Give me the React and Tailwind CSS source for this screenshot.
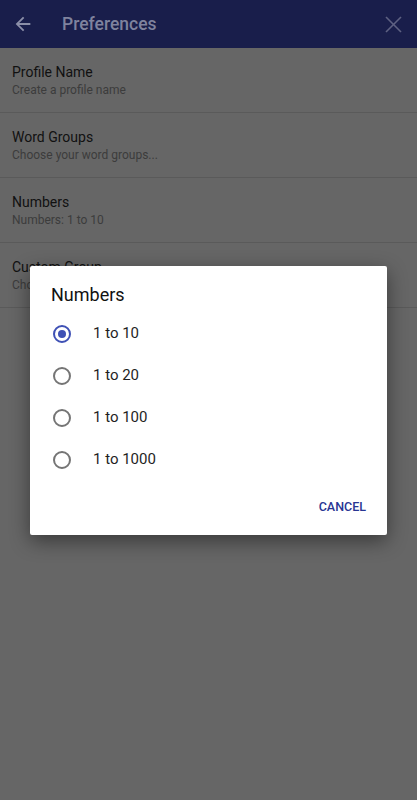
import React, { useState } from 'react';

const items = [
  { title: 'Profile Name', sub: 'Create a profile name' },
  { title: 'Word Groups', sub: 'Choose your word groups...' },
  { title: 'Numbers', sub: 'Numbers: 1 to 10' },
  { title: 'Custom Group', sub: 'Choose a custom group' },
];

const options = ['1 to 10', '1 to 20', '1 to 100', '1 to 1000'];

const App = () => {
  const [selected, setSelected] = useState(0);

  return (
    <div className="relative h-[800px] w-full overflow-hidden bg-[#666666] font-['Roboto',sans-serif]">
      {/* Toolbar (dimmed by the dialog scrim) */}
      <div className="flex h-12 items-center bg-[#191e4b]">
        <svg className="ml-[12px] h-[22px] w-[22px]" viewBox="0 0 24 24" fill="#8b8fa8">
          <path d="M20 11H7.83l5.59-5.59L12 4l-8 8 8 8 1.41-1.41L7.83 13H20v-2z" />
        </svg>
        <span className="ml-[28px] text-[17.5px] font-medium text-[#7f839e]">Preferences</span>
        <svg className="ml-auto mr-[15px] h-[17px] w-[17px]" viewBox="0 0 17 17" stroke="#5e6182" strokeWidth="1.6">
          <line x1="1" y1="1" x2="16" y2="16" />
          <line x1="16" y1="1" x2="1" y2="16" />
        </svg>
      </div>

      {/* Preference list */}
      <div className="flex flex-col">
        {items.map((item) => (
          <div key={item.title} className="border-b border-[#5a5a5a] px-3 pt-[14px] pb-[14px]">
            <div className="text-[14px] leading-[20px] text-[#111111]">{item.title}</div>
            <div className="text-[12px] leading-[16px] text-[#3c3c3c]">{item.sub}</div>
          </div>
        ))}
      </div>

      {/* Dialog */}
      <div className="absolute inset-0 flex items-center justify-center">
        <div className="w-[357px] rounded-[2px] bg-white shadow-[0_6px_20px_rgba(0,0,0,0.45)]">
          <div className="px-[21px] pt-[19px] text-[18px] leading-[20px] text-[#111111]">Numbers</div>
          <div className="mt-[8px] flex flex-col">
            {options.map((opt, i) => (
              <button
                key={opt}
                onClick={() => setSelected(i)}
                className="flex h-[42px] items-center pl-[23px] text-left"
              >
                <span
                  className={
                    'flex h-[18px] w-[18px] items-center justify-center rounded-full border-2 ' +
                    (selected === i ? 'border-[#3f51b5]' : 'border-[#757575]')
                  }
                >
                  {selected === i && <span className="h-[8px] w-[8px] rounded-full bg-[#3f51b5]" />}
                </span>
                <span className="ml-[22px] text-[15px] text-[#1f1f1f]">{opt}</span>
              </button>
            ))}
          </div>
          <div className="mt-[9px] flex justify-end pr-[13px] pb-[9px]">
            <button className="h-9 px-2 text-[12.5px] font-medium text-[#283593]">CANCEL</button>
          </div>
        </div>
      </div>
    </div>
  );
};

export default App;
